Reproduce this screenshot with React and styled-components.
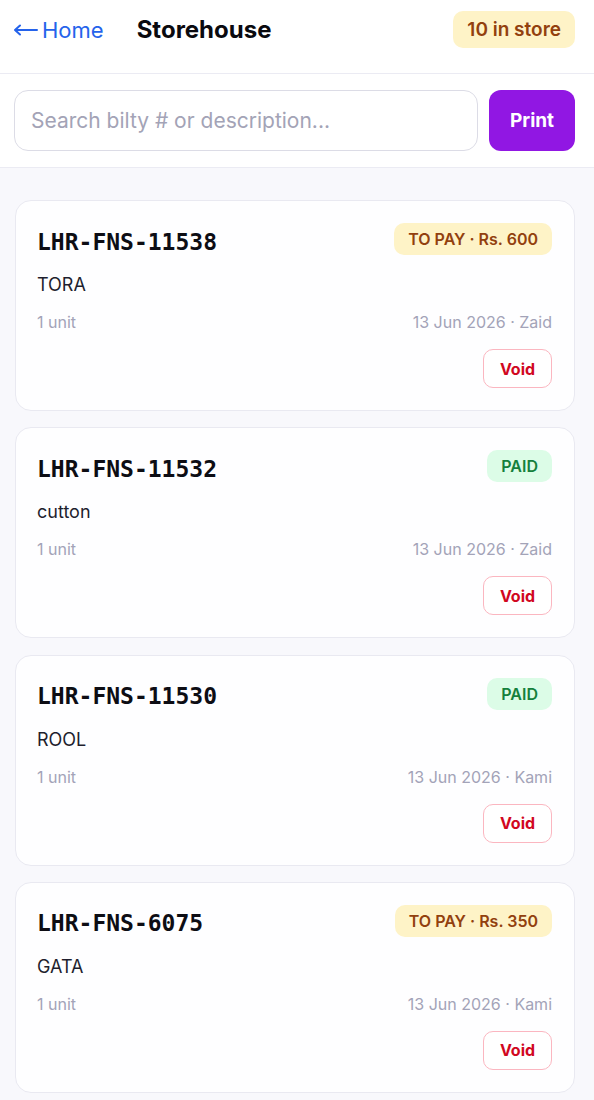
import styled, { createGlobalStyle } from "styled-components";

const GlobalStyle = createGlobalStyle`
  body {
    margin: 0;
    background: #f8f8fc;
    font-family: Inter, "Noto Sans", sans-serif;
  }
`;

const Page = styled.div`
  min-height: 1100px;
  background: #f8f8fc;
`;

const Header = styled.header`
  display: flex;
  align-items: center;
  padding: 11px 19px 25px 13px;
  background: #fff;
  border-bottom: 1px solid #ebebf3;
`;

const BackLink = styled.a`
  display: flex;
  align-items: center;
  gap: 4px;
  color: #2563eb;
  font-size: 22px;
  text-decoration: none;
  margin-right: 33px;
`;

const Title = styled.h1`
  margin: 0;
  font-size: 24px;
  font-weight: 700;
  color: #0a0a0f;
  flex: 1;
`;

const StoreCount = styled.span`
  background: #fef3c7;
  color: #92400e;
  font-size: 19px;
  font-weight: 600;
  padding: 0 14px;
  height: 37px;
  line-height: 37px;
  border-radius: 10px;
`;

const SearchBar = styled.div`
  display: flex;
  gap: 11px;
  padding: 16px 19px 16px 14px;
  background: #fff;
  border-bottom: 1px solid #ebebf3;
`;

const SearchInput = styled.input`
  flex: 1;
  height: 61px;
  box-sizing: border-box;
  border: 1px solid #dcdce6;
  border-radius: 14px;
  padding: 0 16px;
  font-family: inherit;
  font-size: 21px;
  color: #1f1f2e;
  outline: none;
  &::placeholder {
    color: #a3a3b6;
  }
`;

const PrintButton = styled.button`
  width: 86px;
  height: 61px;
  border: none;
  border-radius: 12px;
  background: #9117e3;
  color: #fff;
  font-family: inherit;
  font-size: 19px;
  font-weight: 700;
`;

const List = styled.div`
  display: flex;
  flex-direction: column;
  gap: 16.3px;
  padding: 32px 19px 20px 15px;
`;

const Card = styled.div`
  background: #fefeff;
  border: 1px solid #e9e9f1;
  border-radius: 16px;
  padding: 22px 22px 22px 21px;
`;

const TopRow = styled.div`
  display: flex;
  justify-content: space-between;
  align-items: center;
`;

const Bilty = styled.span`
  font-family: "DejaVu Sans Mono", "Liberation Mono", monospace;
  font-weight: 700;
  font-size: 23px;
  color: #0d0d14;
  margin-top: 5px;
`;

const Badge = styled.span`
  background: ${(p) => (p.paid ? "#dcfce7" : "#fef3c7")};
  color: ${(p) => (p.paid ? "#15803d" : "#92400e")};
  font-size: 16px;
  font-weight: 600;
  height: 32px;
  line-height: 32px;
  padding: 0 14px;
  border-radius: 10px;
`;

const Description = styled.div`
  margin-top: 19px;
  font-size: 18px;
  color: #1f1f2e;
`;

const MetaRow = styled.div`
  display: flex;
  justify-content: space-between;
  margin-top: 17px;
  font-size: 16px;
  color: #a3a3b8;
`;

const Actions = styled.div`
  display: flex;
  justify-content: flex-end;
  margin-top: 17px;
`;

const VoidButton = styled.button`
  width: 69px;
  height: 39px;
  background: #fff;
  border: 1px solid #fbb6c0;
  border-radius: 10px;
  color: #d1081f;
  font-family: inherit;
  font-size: 16px;
  font-weight: 700;
`;

const items = [
  { bilty: "LHR-FNS-11538", desc: "TORA", status: "TO PAY · Rs. 600", by: "Zaid" },
  { bilty: "LHR-FNS-11532", desc: "cutton", status: "PAID", paid: true, by: "Zaid" },
  { bilty: "LHR-FNS-11530", desc: "ROOL", status: "PAID", paid: true, by: "Kami" },
  { bilty: "LHR-FNS-6075", desc: "GATA", status: "TO PAY · Rs. 350", by: "Kami" },
];

const BackArrow = () => (
  <svg width="25" height="12" viewBox="0 0 25 12" fill="none" stroke="currentColor" strokeWidth="2" strokeLinecap="round" strokeLinejoin="round">
    <path d="M24 6H2M7 1.5L2 6l5 4.5" />
  </svg>
);

export default function App() {
  return (
    <Page>
      <GlobalStyle />
      <Header>
        <BackLink href="#">
          <BackArrow />
          Home
        </BackLink>
        <Title>Storehouse</Title>
        <StoreCount>10 in store</StoreCount>
      </Header>
      <SearchBar>
        <SearchInput placeholder="Search bilty # or description..." />
        <PrintButton>Print</PrintButton>
      </SearchBar>
      <List>
        {items.map((it) => (
          <Card key={it.bilty}>
            <TopRow>
              <Bilty>{it.bilty}</Bilty>
              <Badge paid={it.paid}>{it.status}</Badge>
            </TopRow>
            <Description>{it.desc}</Description>
            <MetaRow>
              <span>1 unit</span>
              <span>13 Jun 2026 · {it.by}</span>
            </MetaRow>
            <Actions>
              <VoidButton>Void</VoidButton>
            </Actions>
          </Card>
        ))}
      </List>
    </Page>
  );
}
